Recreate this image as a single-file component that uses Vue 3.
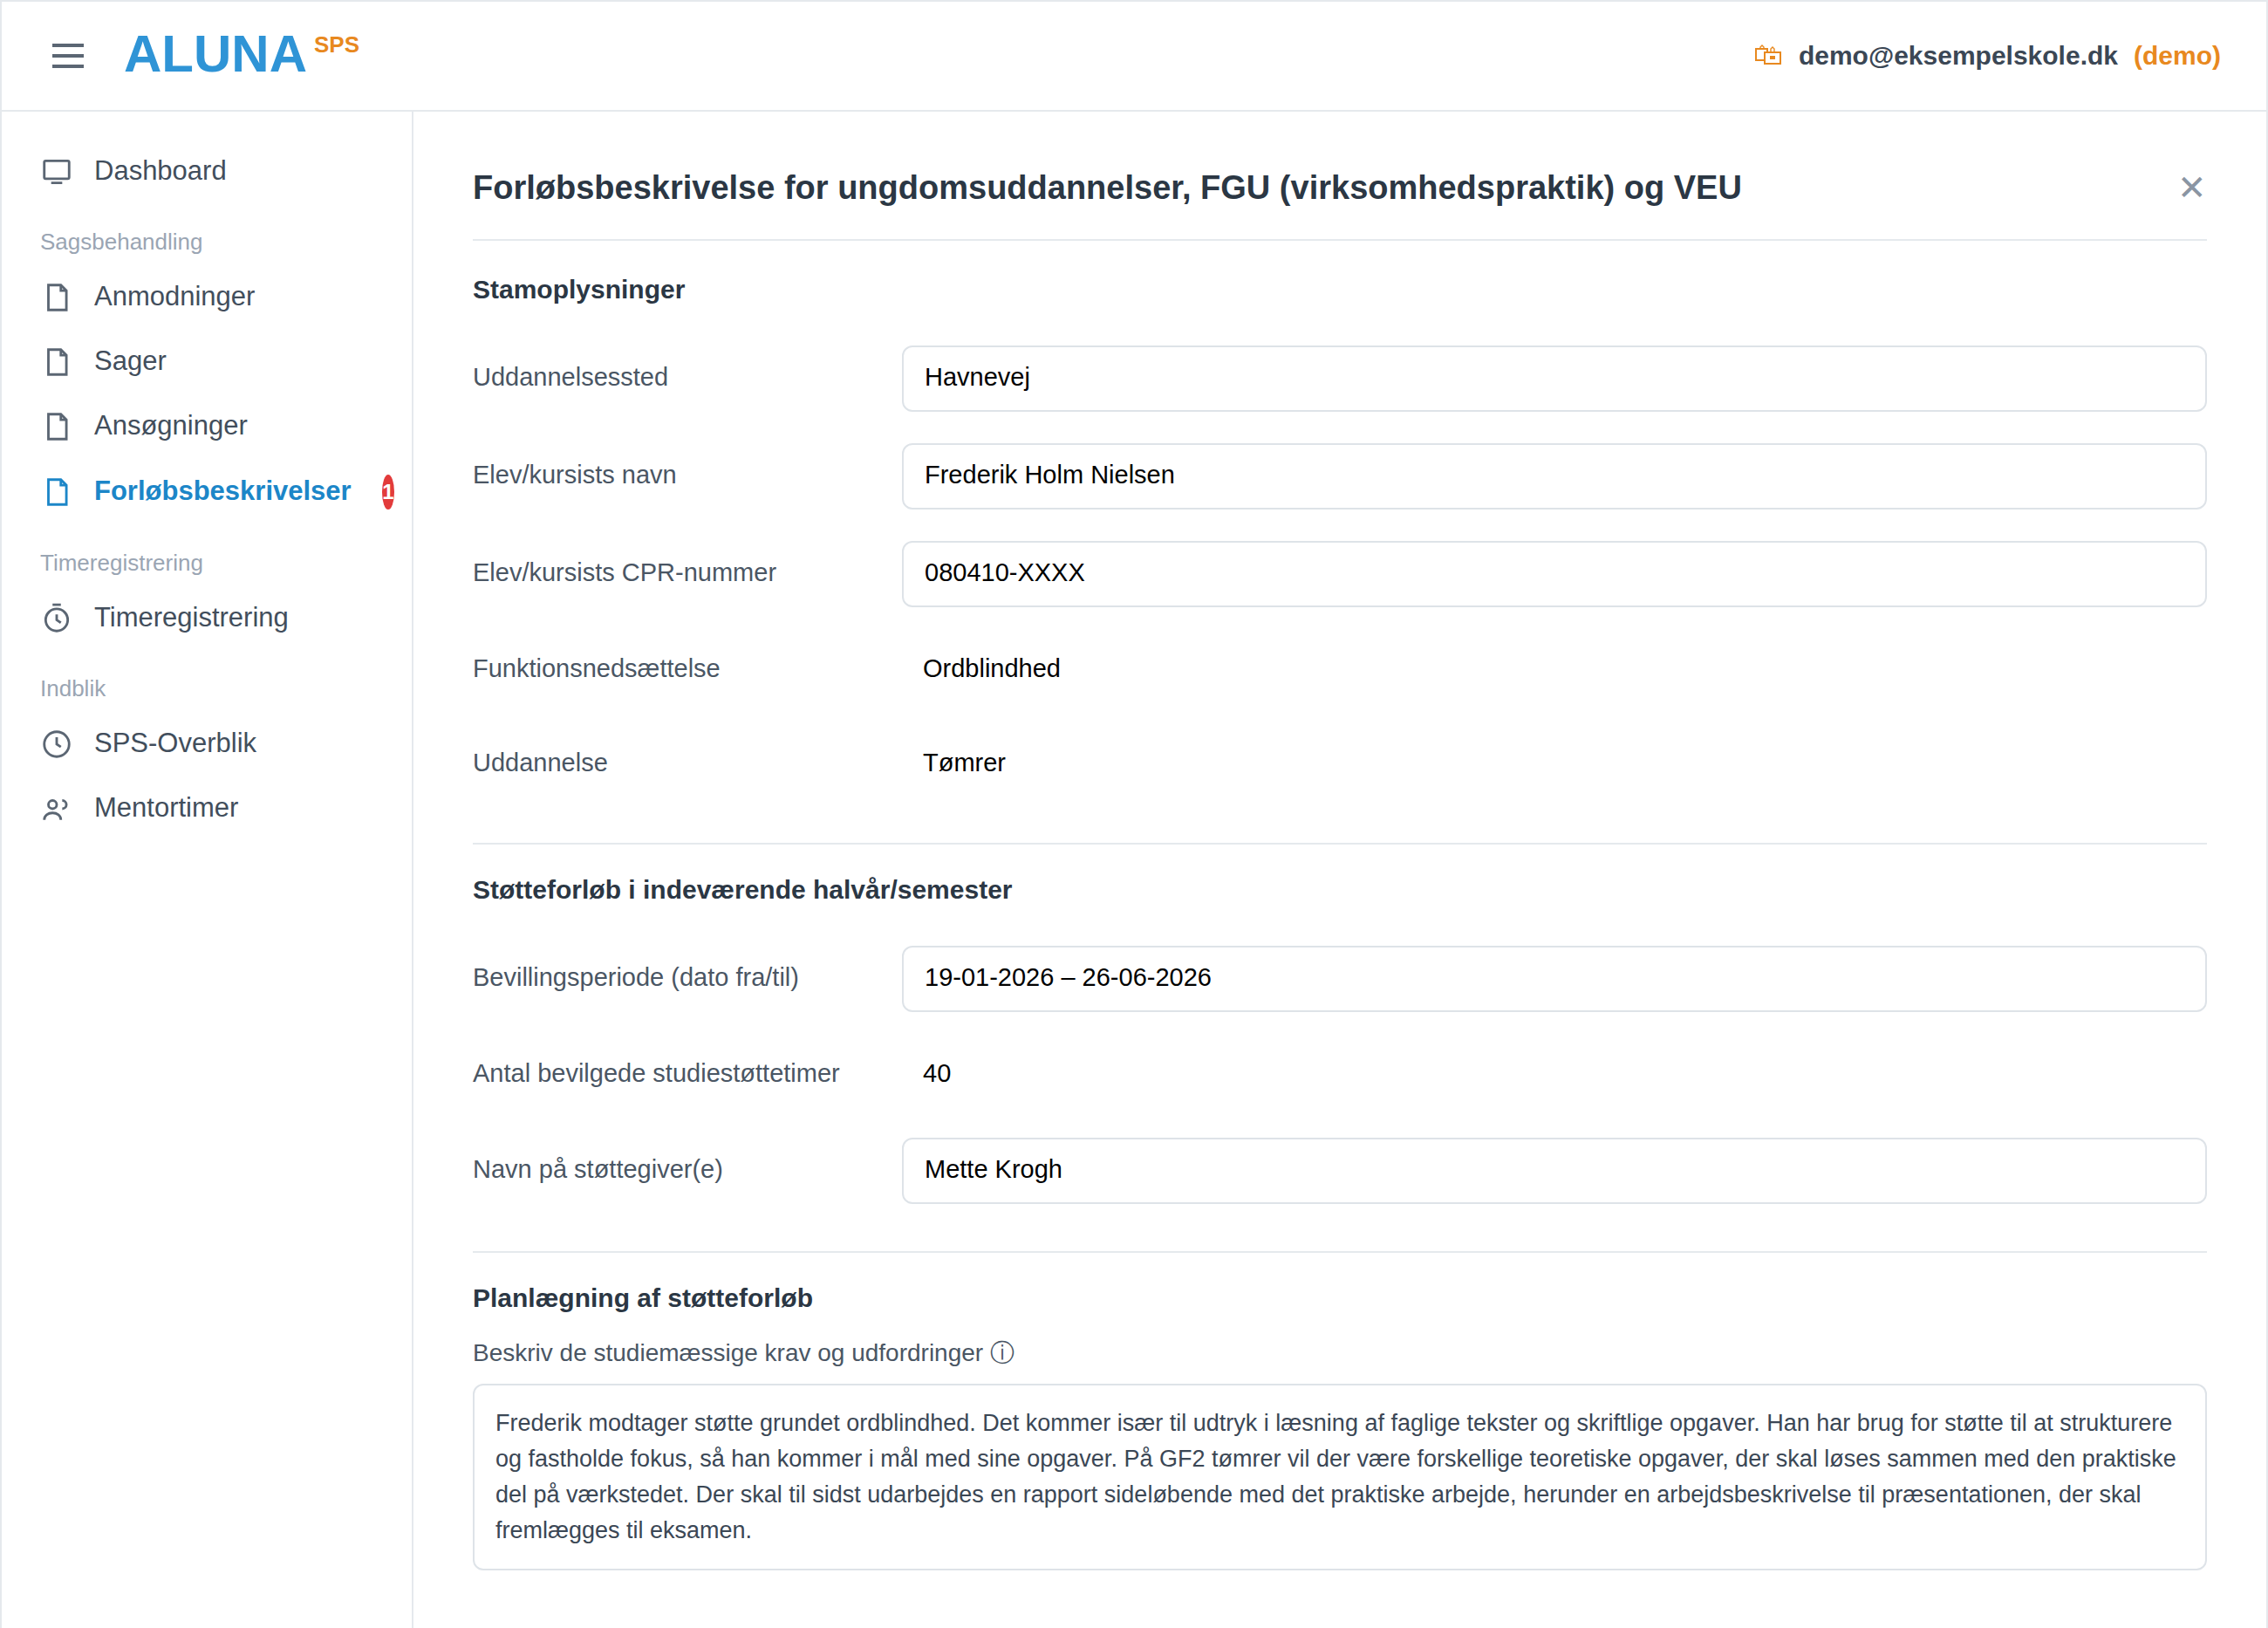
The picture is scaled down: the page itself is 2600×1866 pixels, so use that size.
<script setup>
import { ref } from 'vue'

const navGroups = [
  {
    title: '',
    items: [{ label: 'Dashboard', icon: 'screen' }]
  },
  {
    title: 'Sagsbehandling',
    items: [
      { label: 'Anmodninger', icon: 'file' },
      { label: 'Sager', icon: 'file' },
      { label: 'Ansøgninger', icon: 'file' },
      { label: 'Forløbsbeskrivelser', icon: 'file', active: true, badge: 1 }
    ]
  },
  {
    title: 'Timeregistrering',
    items: [{ label: 'Timeregistrering', icon: 'timer' }]
  },
  {
    title: 'Indblik',
    items: [
      { label: 'SPS-Overblik', icon: 'clock' },
      { label: 'Mentortimer', icon: 'people' }
    ]
  }
]

const iconPaths = {
  screen: 'M4 4h16a1 1 0 0 1 1 1v11a1 1 0 0 1-1 1H4a1 1 0 0 1-1-1V5a1 1 0 0 1 1-1zM8 20h8',
  file: 'M6 3h9l4 4v14H6zM15 3v4h4',
  timer: 'M12 5a8 8 0 1 1 0 16a8 8 0 1 1 0-16zM12 9v4l3 2M9 2h6',
  clock: 'M12 3a9 9 0 1 1 0 18a9 9 0 1 1 0-18zM12 7v5l3 2',
  people: 'M9 6a3 3 0 1 1 0 6a3 3 0 1 1 0-6zM3 20c0-3 2.7-5 6-5s6 2 6 5M16 6a3 3 0 0 1 0 6'
}

const sections = ref([
  {
    title: 'Stamoplysninger',
    fields: [
      { id: 'school', label: 'Uddannelsessted', value: 'Havnevej', editable: true },
      { id: 'name', label: 'Elev/kursists navn', value: 'Frederik Holm Nielsen', editable: true },
      { id: 'cpr', label: 'Elev/kursists CPR-nummer', value: '080410-XXXX', editable: true },
      { id: 'disability', label: 'Funktionsnedsættelse', value: 'Ordblindhed' },
      { id: 'education', label: 'Uddannelse', value: 'Tømrer' }
    ]
  },
  {
    title: 'Støtteforløb i indeværende halvår/semester',
    fields: [
      { id: 'period', label: 'Bevillingsperiode (dato fra/til)', value: '19-01-2026 – 26-06-2026', editable: true },
      { id: 'hours', label: 'Antal bevilgede studiestøttetimer', value: '40' },
      { id: 'supporter', label: 'Navn på støttegiver(e)', value: 'Mette Krogh', editable: true }
    ]
  }
])

const challenges = ref(
  'Frederik modtager støtte grundet ordblindhed. Det kommer især til udtryk i læsning af faglige tekster og skriftlige opgaver. Han har brug for støtte til at strukturere og fastholde fokus, så han kommer i mål med sine opgaver. På GF2 tømrer vil der være forskellige teoretiske opgaver, der skal løses sammen med den praktiske del på værkstedet. Der skal til sidst udarbejdes en rapport sideløbende med det praktiske arbejde, herunder en arbejdsbeskrivelse til præsentationen, der skal fremlægges til eksamen.'
)
</script>

<template>
  <div class="app">
    <header class="topbar">
      <button type="button" class="menu-button" aria-label="Menu">
        <span class="bar" />
        <span class="bar" />
        <span class="bar" />
      </button>
      <a href="#" class="logo">ALUNA<span class="logo-suffix">SPS</span></a>
      <div class="user">
        <svg class="user-icon" viewBox="1 0 32 28">
          <path d="M12 19H2V6h13v3" />
          <path d="M12 10h18v13H12z" />
          <path class="bag-handle" d="M7 6V4l2-2l2 2v2M19 10V6l2-2l2 2v4" />
          <path class="bag-mark" d="M18 14h6v4h-6z" />
        </svg>
        <span>demo@eksempelskole.dk</span>
        <span class="user-role">(demo)</span>
      </div>
    </header>

    <div class="body">
      <nav class="sidebar">
        <div v-for="group in navGroups" :key="group.title" class="nav-group">
          <h2 v-if="group.title" class="nav-title">{{ group.title }}</h2>
          <a
            v-for="item in group.items"
            :key="item.label"
            href="#"
            class="nav-item"
            :class="{ active: item.active }"
          >
            <svg class="nav-icon" viewBox="0 0 24 24">
              <path :d="iconPaths[item.icon]" />
            </svg>
            <span class="nav-label">{{ item.label }}</span>
            <span v-if="item.badge" class="badge">{{ item.badge }}</span>
          </a>
        </div>
      </nav>

      <main class="content">
        <div class="page-head">
          <h1>Forløbsbeskrivelse for ungdomsuddannelser, FGU (virksomhedspraktik) og VEU</h1>
          <button type="button" class="close-button" aria-label="Luk">✕</button>
        </div>

        <section v-for="section in sections" :key="section.title" class="section">
          <h2>{{ section.title }}</h2>
          <div class="fields">
            <div v-for="field in section.fields" :key="field.id" class="field">
              <template v-if="field.editable">
                <label :for="field.id" class="field-name">{{ field.label }}</label>
                <input :id="field.id" v-model="field.value" type="text" />
              </template>
              <template v-else>
                <span class="field-name">{{ field.label }}</span>
                <span class="field-value">{{ field.value }}</span>
              </template>
            </div>
          </div>
        </section>

        <section class="section">
          <h2>Planlægning af støtteforløb</h2>
          <label for="challenges" class="area-label">Beskriv de studiemæssige krav og udfordringer ⓘ</label>
          <textarea id="challenges" v-model="challenges" rows="4" />
        </section>
      </main>
    </div>
  </div>
</template>

<style>
body {
  background: #ffffff;
}
</style>

<style scoped>
* {
  box-sizing: border-box;
}

.app {
  display: flex;
  flex-direction: column;
  min-height: 100vh;
  border: 2px solid #e5e9ed;
  border-bottom: none;
  font-family: "Liberation Sans", Arial, sans-serif;
  color: #2b3744;
}

h1,
h2 {
  margin: 0;
}

a {
  color: inherit;
  text-decoration: none;
}

button {
  border: none;
  background: none;
  padding: 0;
  font-family: inherit;
  cursor: pointer;
}

.topbar {
  display: flex;
  align-items: center;
  height: 126px;
  padding: 0 52px 0 58px;
  border-bottom: 2px solid #e5e9ed;
}

.menu-button {
  display: flex;
  flex-direction: column;
  gap: 8px;
  width: 36px;
}

.bar {
  height: 4px;
  background: #5b6673;
}

.logo {
  display: flex;
  align-items: flex-start;
  gap: 8px;
  margin-left: 46px;
  padding-bottom: 4px;
  font-size: 60px;
  line-height: 68px;
  font-weight: 700;
  color: #2f94d6;
}

.logo-suffix {
  font-size: 26px;
  line-height: 46px;
  color: #e8891f;
}

.user {
  display: flex;
  align-items: center;
  gap: 18px;
  margin-left: auto;
  font-size: 30px;
  font-weight: 700;
  color: #3b4755;
}

.user-icon {
  width: 32px;
  height: 28px;
  fill: none;
  stroke: #e8891f;
  stroke-width: 2;
}

.user-icon .bag-handle {
  stroke-width: 1.4;
}

.user-icon .bag-mark {
  fill: #e8891f;
  stroke: none;
}

.user-role {
  color: #e8891f;
}

.body {
  display: flex;
  flex: 1;
}

.sidebar {
  flex: 0 0 472px;
  padding-top: 32px;
  border-right: 2px solid #e5e9ed;
}

.nav-title {
  padding: 20px 44px 4px;
  font-size: 26px;
  line-height: 46px;
  font-weight: 400;
  color: #9aa5b3;
}

.nav-item {
  display: flex;
  align-items: center;
  padding: 18px 20px 18px 44px;
  font-size: 31px;
  line-height: 34px;
  color: #424e5c;
}

.nav-icon {
  flex: none;
  width: 38px;
  height: 38px;
  margin-right: 24px;
  fill: none;
  stroke: #5b6673;
  stroke-width: 1.8;
}

.nav-label {
  padding-bottom: 2px;
}

.nav-item.active {
  font-weight: 700;
  color: #1c86c8;
}

.nav-item.active .nav-icon {
  stroke: #1c86c8;
}

.badge {
  display: flex;
  align-items: center;
  justify-content: center;
  width: 14px;
  height: 40px;
  margin-left: auto;
  border-radius: 50%;
  background: #e23b3b;
  color: #ffffff;
  font-size: 24px;
}

.content {
  flex: 1;
  min-width: 0;
  padding: 56px 68px 64px;
}

.page-head {
  display: flex;
  align-items: center;
  justify-content: space-between;
  margin-bottom: 4px;
  padding-bottom: 28px;
  border-bottom: 2px solid #e5e9ed;
}

.page-head h1 {
  font-size: 38px;
  line-height: 62px;
}

.close-button {
  font-size: 40px;
  line-height: 42px;
  color: #8a95a3;
}

.section {
  padding-top: 32px;
}

.section + .section {
  margin-top: 54px;
  border-top: 2px solid #e5e9ed;
}

.section h2 {
  margin-bottom: 44px;
  font-size: 30px;
  line-height: 40px;
}

.fields {
  display: flex;
  flex-direction: column;
  gap: 36px;
}

.field {
  display: grid;
  grid-template-columns: 456px 1fr;
  column-gap: 36px;
  align-items: center;
  min-height: 72px;
  font-size: 29px;
  color: #4a5664;
}

input,
textarea {
  display: block;
  width: 100%;
  margin: 0;
  border: 2px solid #dee3e8;
  border-radius: 12px;
  background: #ffffff;
  font-family: inherit;
}

input {
  height: 76px;
  padding: 0 24px 4px;
  font-size: 29px;
  color: #000000;
}

.field-name {
  padding-bottom: 4px;
}

.field-value {
  padding: 0 24px 4px;
  color: #000000;
}

.section .area-label {
  display: block;
  margin: -21px 0 15px;
  font-size: 28px;
  line-height: 40px;
  color: #4a5664;
}

textarea {
  height: 214px;
  padding: 23px 24px;
  font-size: 27px;
  line-height: 41px;
  color: #3b4755;
  resize: none;
}
</style>
